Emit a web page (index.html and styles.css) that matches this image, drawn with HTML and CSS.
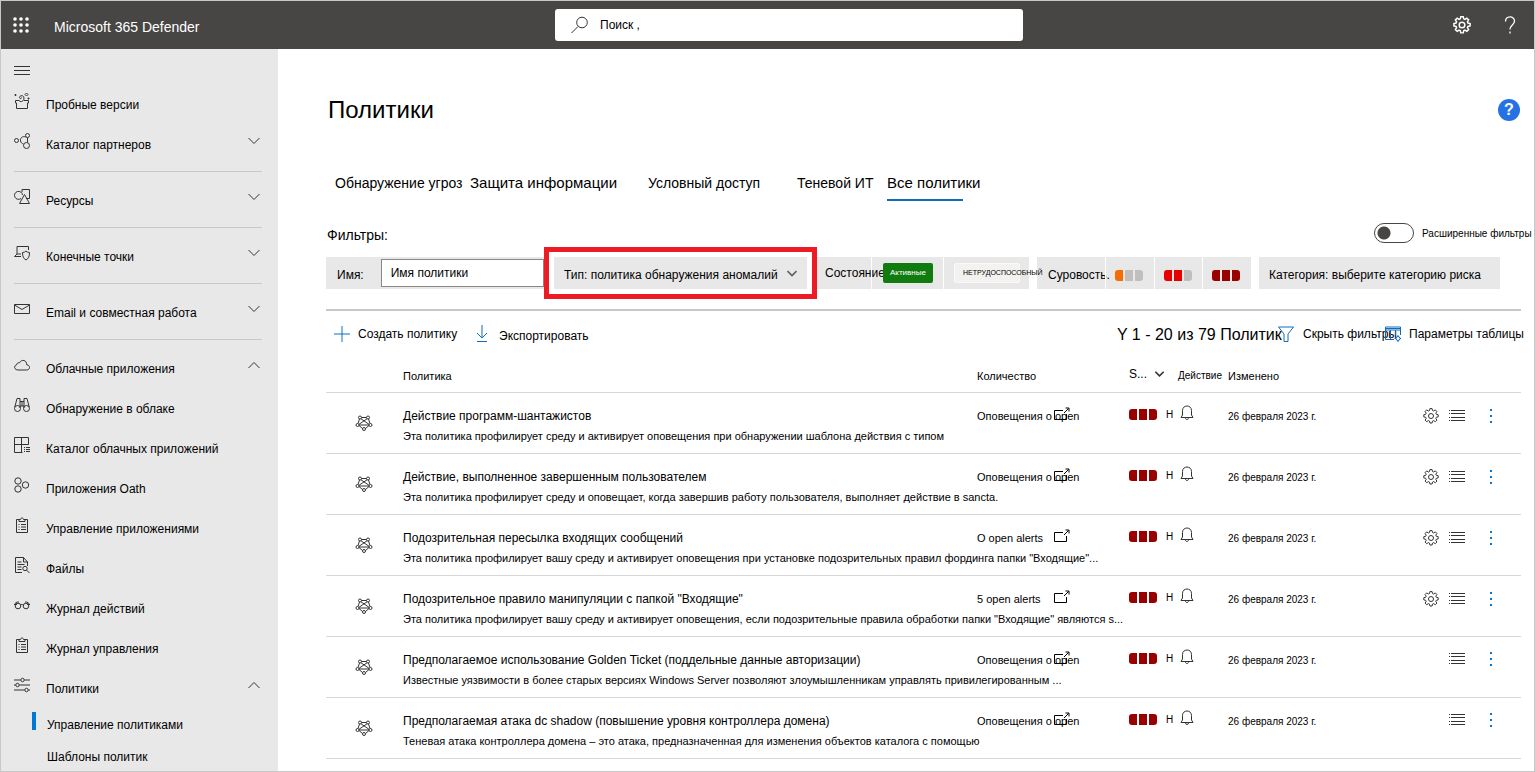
FILE: index.html
```html
<!DOCTYPE html>
<html lang="ru">
<head>
<meta charset="utf-8">
<title>Политики - Microsoft 365 Defender</title>
<link rel="stylesheet" href="styles.css">
</head>
<body>
<svg class="sprite" aria-hidden="true">
  <symbol id="i-gear" viewBox="0 0 16 16"><path d="M6.9.6h2.2l.4 1.9 1.1.5 1.7-1.1 1.6 1.6-1.1 1.7.5 1.1 1.9.4v2.2l-1.9.4-.5 1.1 1.1 1.7-1.6 1.6-1.7-1.1-1.1.5-.4 1.900H6.900l-.4-1.900-1.100-.5-1.700 1.100-1.600-1.600 1.100-1.700-.5-1.100-1.900-.4V6.700l1.900-.4.5-1.100-1.100-1.700 1.600-1.600 1.700 1.100 1.100-.5z"/><circle cx="8" cy="8" r="2.500"/></symbol>
  <symbol id="i-down" viewBox="0 0 12 8"><path d="M.5 1 6 6.500 11.500 1"/></symbol>
  <symbol id="i-up" viewBox="0 0 12 8"><path d="M.5 7 6 1.500 11.500 7"/></symbol>
  <symbol id="i-gift" viewBox="0 0 16 16"><path d="M2.500 10v5.500h11V10M5.500 7.500h-4V10h1M10 7.500h4.500V10h-1M5.500 8.500c3 .5 4.500-1 4.500-3.500C10 2 5.500 2 5.500 4.500c0 1.500 2 1.500 2 0M1.500 1v2M.500 2h2M12.500 0 14 1.500 12.500 3 11 1.500zM14.500 4.500v2M13.500 5.500h2"/></symbol>
  <symbol id="i-partners" viewBox="0 0 16 16"><circle cx="2.500" cy="7.500" r="2"/><circle cx="13.500" cy="2.500" r="2"/><circle cx="12.500" cy="12.500" r="3"/><path d="M12 4C8 2.500 6 5.500 6.500 8c.3 1.500 1.500 2.500 3 3M13.500 4.500v5"/></symbol>
  <symbol id="i-assets" viewBox="0 0 16 16"><path d="M8 3V.5h7.500v9H12M7 9.500A4 4 0 1 1 8.500 6M10.500 5.500 5.500 14.500h10z"/></symbol>
  <symbol id="i-endpoint" viewBox="0 0 16 16"><path d="M3 9V1.500h11.500V5M7 11.500H.5L3 9h4M8.500 7.500c1.500 0 2.500-.5 3.500-1.500 1 1 2 1.500 3.500 1.500 0 4-1 6-3.500 7.500-2.500-1.500-3.500-3.500-3.500-7.500z"/></symbol>
  <symbol id="i-mail" viewBox="0 0 16 16"><path d="M.5 3.500h15v9H.5zM.5 4 8 8.500 15.500 4"/></symbol>
  <symbol id="i-cloud" viewBox="0 0 16 16"><path d="M4 13h8.500c4 0 4-5 .2-5.200C13 3 7.500 1.800 5.500 5.800c-2-.3-2.800.8-2.800 2C-.3 8.200-.2 13 4 13z"/></symbol>
  <symbol id="i-bino" viewBox="0 0 16 16"><circle cx="3.500" cy="11.500" r="3"/><circle cx="12.500" cy="11.500" r="3"/><path d="M.8 10 3 1.500h3V11M10 11V1.500h3l2.200 8.500M6 4.500h4M6 9h4M8 4.500V9"/></symbol>
  <symbol id="i-catalog" viewBox="0 0 16 16"><path d="M8.500 15.500h-8V.5h14v7H.5M7.500.5v15M10 10.500h1M12 10.500h4M10 12.500h1M12 12.500h4M10 14.500h1M12 14.500h4"/></symbol>
  <symbol id="i-oauth" viewBox="0 0 16 16"><circle cx="4" cy="4" r="3.200"/><circle cx="4" cy="12" r="3.200"/><circle cx="11.500" cy="8" r="3.200"/></symbol>
  <symbol id="i-clip" viewBox="0 0 16 16"><path d="M5 2.500H2.500v13h11v-13H11M5 4.500h6v-2H9.500c0-2-3-2-3 0H5zM4.500 7.500h1M7 7.500h5M4.500 10h1M7 10h5M4.500 12.500h1M7 12.500h5"/></symbol>
  <symbol id="i-file" viewBox="0 0 16 16"><path d="M8 15.500H1.500V.5h8L13.500 5v4M9.500.5V5h4M3.500 5h4M3.500 7.500h7M3.500 10h4M3.500 12.500h4"/><circle cx="11" cy="11.500" r="2.200"/><path d="m12.500 13 3 3"/></symbol>
  <symbol id="i-glasses" viewBox="0 0 16 16"><circle cx="4" cy="9" r="2.800"/><circle cx="12" cy="9" r="2.800"/><path d="M.5 8c.5-2.500 2-3 4.500-3M15.500 8c-.5-2.500-2-3-4.500-3M6.500 8c1-.7 2-.7 3 0M0 7.500h3M13 7.500h3"/></symbol>
  <symbol id="i-sliders" viewBox="0 0 16 16"><path d="M0 3h7M10 3h6M0 8h2M5 8h11M0 13h11M14 13h2"/><rect x="7" y="1.200" width="3" height="3.600" rx="1.500"/><rect x="2" y="6.200" width="3" height="3.600" rx="1.500"/><rect x="11" y="11.200" width="3" height="3.600" rx="1.500"/></symbol>
  <symbol id="i-anomaly" viewBox="0 0 18 18"><circle cx="5" cy="3.500" r="1.500"/><circle cx="13" cy="3.500" r="1.500"/><circle cx="2.500" cy="11" r="1.500"/><circle cx="15.500" cy="11" r="1.500"/><circle cx="9" cy="15" r="1.500"/><path d="M6.500 3.500h5M4.500 5 3 9.500M13.500 5 15 9.500M4 11.500 7.500 14.500M14 11.500 10.500 14.500M6 4.800l8 5.500M12 4.800 4 10.300M4 11h10"/></symbol>
  <symbol id="i-open" viewBox="0 0 16 14"><path d="M9 3.500H.5v9h12V7M10 6l4.500-4.500M11.500 1H15v3.500"/></symbol>
  <symbol id="i-bell" viewBox="0 0 14 16"><path d="M1 12.500h12L11.500 10V5.500c0-6-9-6-9 0V10zM5.500 13c0 2 3 2 3 0"/></symbol>
  <symbol id="i-list" viewBox="0 0 16 14"><path d="M0 1.500h1M2 1.500h14M0 4.500h1M2 4.500h14M0 8.500h1M2 8.500h14M0 11.500h1M2 11.500h14"/></symbol>
</svg>

<div class="app">
  <header class="topbar">
    <button class="waffle" aria-label="Средство запуска приложений"><svg viewBox="0 0 16 16"><circle cx="2" cy="2" r="1.800"/><circle cx="8" cy="2" r="1.800"/><circle cx="14" cy="2" r="1.800"/><circle cx="2" cy="8" r="1.800"/><circle cx="8" cy="8" r="1.800"/><circle cx="14" cy="8" r="1.800"/><circle cx="2" cy="14" r="1.800"/><circle cx="8" cy="14" r="1.800"/><circle cx="14" cy="14" r="1.800"/></svg></button>
    <span class="brand">Microsoft 365 Defender</span>
    <label class="search"><svg class="line" viewBox="0 0 18 18" aria-hidden="true"><circle cx="11" cy="6.500" r="5.300"/><path d="M7 10.500.5 17"/></svg><input type="search" placeholder="Поиск ," aria-label="Поиск"></label>
    <div class="top-actions">
      <button aria-label="Параметры"><svg class="line i18"><use href="#i-gear"/></svg></button>
      <button aria-label="Справка"><svg class="line i18" viewBox="0 0 18 18"><path d="M4.500 5.500c0-6 9-6 9-.5 0 4-4.500 4-4.500 8.500M9 15.500V17.500"/></svg></button>
    </div>
  </header>

  <nav class="sidebar" aria-label="Навигация">
    <button class="burger" aria-label="Свернуть"><svg class="line i16" viewBox="0 0 16 16"><path d="M0 4.500h16M0 8.500h16M0 12.500h16"/></svg></button>
    <a class="nav-item" href="#"><svg class="line i16"><use href="#i-gift"/></svg><span>Пробные версии</span></a>
    <a class="nav-item" href="#"><svg class="line i16"><use href="#i-partners"/></svg><span>Каталог партнеров</span><svg class="line chev"><use href="#i-down"/></svg></a>
    <hr class="nav-sep">
    <a class="nav-item" href="#"><svg class="line i16"><use href="#i-assets"/></svg><span>Ресурсы</span><svg class="line chev"><use href="#i-down"/></svg></a>
    <hr class="nav-sep">
    <a class="nav-item" href="#"><svg class="line i16"><use href="#i-endpoint"/></svg><span>Конечные точки</span><svg class="line chev"><use href="#i-down"/></svg></a>
    <hr class="nav-sep">
    <a class="nav-item" href="#"><svg class="line i16"><use href="#i-mail"/></svg><span>Email и совместная работа</span><svg class="line chev"><use href="#i-down"/></svg></a>
    <hr class="nav-sep">
    <a class="nav-item" href="#"><svg class="line i16"><use href="#i-cloud"/></svg><span>Облачные приложения</span><svg class="line chev"><use href="#i-up"/></svg></a>
    <a class="nav-item" href="#"><svg class="line i16"><use href="#i-bino"/></svg><span>Обнаружение в облаке</span></a>
    <a class="nav-item" href="#"><svg class="line i16"><use href="#i-catalog"/></svg><span>Каталог облачных приложений</span></a>
    <a class="nav-item" href="#"><svg class="line i16"><use href="#i-oauth"/></svg><span>Приложения Oath</span></a>
    <a class="nav-item" href="#"><svg class="line i16"><use href="#i-clip"/></svg><span>Управление приложениями</span></a>
    <a class="nav-item" href="#"><svg class="line i16"><use href="#i-file"/></svg><span>Файлы</span></a>
    <a class="nav-item" href="#"><svg class="line i16"><use href="#i-glasses"/></svg><span>Журнал действий</span></a>
    <a class="nav-item" href="#"><svg class="line i16"><use href="#i-clip"/></svg><span>Журнал управления</span></a>
    <a class="nav-item" href="#"><svg class="line i16"><use href="#i-sliders"/></svg><span>Политики</span><svg class="line chev"><use href="#i-up"/></svg></a>
    <a class="nav-sub current" href="#">Управление политиками</a>
    <a class="nav-sub" href="#">Шаблоны политик</a>
  </nav>

  <main class="content">
    <div class="title-row">
      <h1>Политики</h1>
      <button class="help" aria-label="Справка">?</button>
    </div>
    <div class="tabs" role="tablist">
      <button class="tab tab-threat" role="tab">Обнаружение угроз</button>
      <button class="tab tab-info" role="tab">Защита информации</button>
      <button class="tab tab-access" role="tab">Условный доступ</button>
      <button class="tab tab-shadow" role="tab">Теневой ИТ</button>
      <button class="tab tab-all" role="tab" aria-selected="true">Все политики</button>
    </div>

    <div class="filters-head">
      <span>Фильтры:</span>
      <label class="advanced"><input type="checkbox" class="toggle"><span>Расширенные фильтры</span></label>
    </div>
    <div class="filters">
      <div class="group name-group"><label for="name">Имя:</label><input id="name" type="text" value="Имя политики"></div>
      <div class="type-group">
        <select aria-label="Тип"><option>Тип: политика обнаружения аномалий</option></select>
        <svg class="line type-chev"><use href="#i-down"/></svg>
      </div>
      <div class="group state-group">
        <span class="label state-label">Состояние:</span>
        <div class="cell cell-active"><button class="pill active">Активные</button></div>
        <div class="cell cell-disabled"><button class="pill disabled">НЕТРУДОСПОСОБНЫЙ</button></div>
      </div>
      <div class="group severity-group">
        <span class="label severity-label">Суровость.</span>
        <button class="cell sev-cell" aria-label="Низкая"><span class="sev low"><i></i><i></i><i></i></span></button>
        <button class="cell sev-cell" aria-label="Средняя"><span class="sev medium"><i></i><i></i><i></i></span></button>
        <button class="cell sev-cell" aria-label="Высокая"><span class="sev"><i></i><i></i><i></i></span></button>
      </div>
      <button class="group category">Категория: выберите категорию риска</button>
    </div>

    <div class="toolbar">
      <button class="tool create"><svg class="line blue i16" viewBox="0 0 16 16"><path d="M8 0v16M0 8h16"/></svg>Создать политику</button>
      <button class="tool export"><svg class="line blue" viewBox="0 0 12 18"><path d="M6 0v12.500M1 8l5 5 5-5M1 16.500h10"/></svg><span>Экспортировать</span></button>
      <span class="counter">Y 1 - 20 из 79 Политик</span>
      <button class="tool hide"><svg class="line blue i16" viewBox="0 0 16 16"><path d="M.5 1h15L10 8v7.500H6V8z"/></svg>Скрыть фильтры</button>
      <button class="tool params"><svg class="line blue i16" viewBox="0 0 16 16"><path d="M9 13.500H.5V1h15v8M.5 4h15M.5 2.500h15M5.500 4v9M10.500 4v5"/><circle cx="13" cy="12.500" r="2"/><path d="M13 9v1.500M13 14.500V16M9.500 12.500H11M15 12.500h1"/></svg>Параметры таблицы</button>
    </div>

    <table class="policies">
      <colgroup><col class="c-icon"><col><col class="c-count"><col class="c-sev"><col class="c-action"><col class="c-date"><col class="c-tools"></colgroup>
      <thead>
        <tr><th></th><th>Политика</th><th>Количество</th><th class="sort"><button>S... <svg class="line"><use href="#i-down"/></svg></button></th><th class="th-action">Действие</th><th>Изменено</th><th></th></tr>
      </thead>
      <tbody>
        <tr>
          <td class="kind"><svg class="line i18"><use href="#i-anomaly"/></svg></td>
          <td><a class="name" href="#">Действие программ-шантажистов</a><p class="desc">Эта политика профилирует среду и активирует оповещения при обнаружении шаблона действия с типом</p></td>
          <td><a class="alerts" href="#">Оповещения о open<svg class="line"><use href="#i-open"/></svg></a></td>
          <td><span class="sev"><i></i><i></i><i></i></span></td>
          <td><span class="act"><span>Н</span><svg class="line"><use href="#i-bell"/></svg></span></td>
          <td class="date">26 февраля 2023 г.</td>
          <td><div class="tools"><button aria-label="Параметры"><svg class="line i16"><use href="#i-gear"/></svg></button><button aria-label="Список"><svg class="line list"><use href="#i-list"/></svg></button><button class="more" aria-label="Ещё"><i></i><i></i><i></i></button></div></td>
        </tr>
        <tr>
          <td class="kind"><svg class="line i18"><use href="#i-anomaly"/></svg></td>
          <td><a class="name" href="#">Действие, выполненное завершенным пользователем</a><p class="desc">Эта политика профилирует среду и оповещает, когда завершив работу пользователя, выполняет действие в sancta.</p></td>
          <td><a class="alerts" href="#">Оповещения о open<svg class="line"><use href="#i-open"/></svg></a></td>
          <td><span class="sev"><i></i><i></i><i></i></span></td>
          <td><span class="act"><span>Н</span><svg class="line"><use href="#i-bell"/></svg></span></td>
          <td class="date">26 февраля 2023 г.</td>
          <td><div class="tools"><button aria-label="Параметры"><svg class="line i16"><use href="#i-gear"/></svg></button><button aria-label="Список"><svg class="line list"><use href="#i-list"/></svg></button><button class="more" aria-label="Ещё"><i></i><i></i><i></i></button></div></td>
        </tr>
        <tr>
          <td class="kind"><svg class="line i18"><use href="#i-anomaly"/></svg></td>
          <td><a class="name" href="#">Подозрительная пересылка входящих сообщений</a><p class="desc">Эта политика профилирует вашу среду и активирует оповещения при установке подозрительных правил фординга папки "Входящие"...</p></td>
          <td><a class="alerts" href="#">О open alerts<svg class="line"><use href="#i-open"/></svg></a></td>
          <td><span class="sev"><i></i><i></i><i></i></span></td>
          <td><span class="act"><span>Н</span><svg class="line"><use href="#i-bell"/></svg></span></td>
          <td class="date">26 февраля 2023 г.</td>
          <td><div class="tools"><button aria-label="Параметры"><svg class="line i16"><use href="#i-gear"/></svg></button><button aria-label="Список"><svg class="line list"><use href="#i-list"/></svg></button><button class="more" aria-label="Ещё"><i></i><i></i><i></i></button></div></td>
        </tr>
        <tr>
          <td class="kind"><svg class="line i18"><use href="#i-anomaly"/></svg></td>
          <td><a class="name" href="#">Подозрительное правило манипуляции с папкой "Входящие"</a><p class="desc">Эта политика профилирует вашу среду и активирует оповещения, если подозрительные правила обработки папки "Входящие" являются s...</p></td>
          <td><a class="alerts" href="#">5 open alerts<svg class="line"><use href="#i-open"/></svg></a></td>
          <td><span class="sev"><i></i><i></i><i></i></span></td>
          <td><span class="act"><span>Н</span><svg class="line"><use href="#i-bell"/></svg></span></td>
          <td class="date">26 февраля 2023 г.</td>
          <td><div class="tools"><button aria-label="Параметры"><svg class="line i16"><use href="#i-gear"/></svg></button><button aria-label="Список"><svg class="line list"><use href="#i-list"/></svg></button><button class="more" aria-label="Ещё"><i></i><i></i><i></i></button></div></td>
        </tr>
        <tr>
          <td class="kind"><svg class="line i18"><use href="#i-anomaly"/></svg></td>
          <td><a class="name" href="#">Предполагаемое использование Golden Ticket (поддельные данные авторизации)</a><p class="desc">Известные уязвимости в более старых версиях Windows Server позволяют злоумышленникам управлять привилегированным ...</p></td>
          <td><a class="alerts" href="#">Оповещения о open<svg class="line"><use href="#i-open"/></svg></a></td>
          <td><span class="sev"><i></i><i></i><i></i></span></td>
          <td><span class="act"><span>Н</span><svg class="line"><use href="#i-bell"/></svg></span></td>
          <td class="date">26 февраля 2023 г.</td>
          <td><div class="tools"><button aria-label="Список"><svg class="line list"><use href="#i-list"/></svg></button><button class="more" aria-label="Ещё"><i></i><i></i><i></i></button></div></td>
        </tr>
        <tr>
          <td class="kind"><svg class="line i18"><use href="#i-anomaly"/></svg></td>
          <td><a class="name" href="#">Предполагаемая атака dc shadow (повышение уровня контроллера домена)</a><p class="desc">Теневая атака контроллера домена – это атака, предназначенная для изменения объектов каталога с помощью</p></td>
          <td><a class="alerts" href="#">Оповещения о open<svg class="line"><use href="#i-open"/></svg></a></td>
          <td><span class="sev"><i></i><i></i><i></i></span></td>
          <td><span class="act"><span>Н</span><svg class="line"><use href="#i-bell"/></svg></span></td>
          <td class="date">26 февраля 2023 г.</td>
          <td><div class="tools"><button aria-label="Список"><svg class="line list"><use href="#i-list"/></svg></button><button class="more" aria-label="Ещё"><i></i><i></i><i></i></button></div></td>
        </tr>
      </tbody>
    </table>
  </main>
</div>
</body>
</html>
```
FILE: styles.css
```css
* { box-sizing: border-box; }

body {
  margin: 0;
  background: #fff;
  color: #000;
  font: 12px/16px "Liberation Sans", Arial, sans-serif;
  white-space: nowrap;
}

button, input, select {
  margin: 0;
  padding: 0;
  border: 0;
  background: none;
  color: inherit;
  font: inherit;
}

button { text-align: left; }
a { color: inherit; text-decoration: none; }
svg { flex: none; display: block; }

.sprite { display: none; }
.line { fill: none; stroke: #333; stroke-width: 1; }
.blue { stroke: #0f6cbd; }
.i16 { width: 16px; height: 16px; }
.i18 { width: 18px; height: 18px; }

.app {
  display: grid;
  grid-template: 48px 1fr / 277px minmax(0, 1fr);
  min-height: 100vh;
  border: 1px solid #c8c8c8;
  overflow: hidden;
}

/* Top bar */
.topbar {
  grid-column: 1 / -1;
  display: grid;
  grid-template-columns: 53px 1fr 468px 1fr;
  align-items: center;
  padding-right: 10px;
  background: #484644;
  color: #fff;
}
.waffle { padding-left: 12px; }
.waffle svg { width: 16px; height: 16px; fill: #fff; }
.brand { padding-top: 4px; font-size: 14px; }
.search {
  display: flex;
  align-items: center;
  gap: 11px;
  height: 32px;
  padding: 0 16px;
  border-radius: 3px;
  background: #fff;
  color: #000;
}
.search svg { width: 18px; height: 18px; }
.search input { flex: 1; min-width: 0; outline: 0; }
.search input::placeholder { color: #000; opacity: 1; }
.top-actions {
  display: flex;
  justify-content: flex-end;
  gap: 30px;
  padding-right: 5px;
}
.top-actions .line { stroke: #fff; stroke-width: 1.3; }

/* Sidebar */
.sidebar {
  padding-top: 9px;
  background: #e8e8e8;
}
.burger { display: block; height: 24px; margin-bottom: 2px; padding: 0 13px; }
.nav-item {
  display: flex;
  align-items: center;
  gap: 16px;
  height: 40px;
  padding: 0 18px 0 13px;
}
.nav-item svg { margin-bottom: 6px; }
.nav-item span { padding-top: 1px; }
.nav-item .chev { width: 12px; height: 8px; margin-left: auto; }
.nav-sep {
  height: 1px;
  margin: 7px 16px 8px 13px;
  border: 0;
  background: #c8c8c8;
}
.nav-sub {
  display: block;
  padding: 9px 0 5px 46px;
}
.nav-sub.current {
  margin: 0 0 2px 31px;
  padding-left: 15px;
  background: linear-gradient(#0078d4, #0078d4) 0 4px / 4px 18px no-repeat;
}

/* Page */
.content { padding: 45px 13px 0 48px; }
.title-row {
  display: flex;
  align-items: center;
  justify-content: space-between;
  padding: 0 1px 0 2px;
}
h1 { margin: 0; font-size: 24px; line-height: 32px; font-weight: 400; }
.help {
  width: 22px;
  height: 22px;
  border-radius: 50%;
  background: #2672e4;
  color: #fff;
  font-size: 16px;
  font-weight: 700;
  text-align: center;
}
.tabs {
  display: flex;
  margin-top: 39px;
  padding-left: 9px;
  font-size: 14px;
}
.tab { height: 36px; }
.tab-threat { width: 135px; }
.tab-info { width: 178px; font-size: 15px; }
.tab-access { width: 149px; }
.tab-shadow { width: 90px; }
.tab-all { width: 76px; border-bottom: 2px solid #0f6cbd; padding-top: 2px; font-size: 15px; }

.filters-head {
  display: flex;
  justify-content: space-between;
  align-items: center;
  height: 24px;
  margin-top: 20px;
  font-size: 14px;
}
.filters-head > span { padding: 4px 0 0 1px; }
.advanced {
  display: flex;
  align-items: center;
  gap: 8px;
  width: 147px;
  font-size: 10px;
}
.advanced span { padding-top: 2px; }
.toggle {
  appearance: none;
  flex: none;
  width: 40px;
  height: 20px;
  border: 1px solid #484644;
  border-radius: 10px;
  background: radial-gradient(circle at 9px 9px, #484644 6px, transparent 7px);
}

.filters { display: flex; margin-top: 12px; }
.group { height: 32px; background: #e8e8e8; }
.name-group {
  display: flex;
  align-items: center;
  gap: 17px;
  width: 218px;
  padding: 2px 0 2px 11px;
}
.name-group label { padding-top: 4px; }
.name-group input {
  flex: 1;
  min-width: 0;
  height: 28px;
  padding: 0 9px;
  border: 1px solid #8a8886;
  background: #fff;
}
.type-group {
  position: relative;
  width: 253px;
  height: 32px;
  margin: 0 10px;
  background: #e8e8e8;
  outline: 5px solid #ed1c24;
  outline-offset: 5px;
}
.type-group select {
  width: 100%;
  height: 32px;
  padding: 4px 0 0 10px;
  appearance: none;
}
.type-chev {
  position: absolute;
  top: 13px;
  right: 10px;
  width: 10px;
  height: 7px;
  stroke: #605e5c;
  stroke-width: 2;
  pointer-events: none;
}
.state-group, .severity-group { display: flex; }
.state-group { width: 212px; margin-right: 8px; }
.label { line-height: 32px; }
.state-label { width: 54px; padding-left: 8px; }
.cell {
  display: flex;
  align-items: center;
  border-left: 1px solid #fff;
}
.cell-active { width: 72px; padding-left: 11px; }
.cell-disabled { padding-left: 10px; }
.pill {
  height: 20px;
  border-radius: 2px;
  font-size: 8px;
}
.active { width: 50px; padding-left: 7px; background: #107c10; color: #fff; }
.disabled {
  position: relative;
  width: 66px;
  padding-left: 8px;
  border: 1px solid #faf9f8;
  background: #f3f2f1;
  font-size: 7px;
}
.severity-group { width: 214px; margin-right: 8px; }
.severity-label { width: 68px; padding-left: 11px; line-height: 36px; }
.sev-cell { width: 49px; padding: 4px 0 0 9px; }
.sev { display: flex; gap: 2px; }
.sev i { width: 8px; height: 11px; background: #900; }
.sev i:first-child { border-radius: 3px 0 0 3px; }
.sev i:last-child { border-radius: 0 3px 3px 0; }
.low i, .medium i { background: #c0bfbd; }
.low i:first-child { background: #f76c00; }
.medium i:nth-child(-n+2) { background: #e60000; }
.category { width: 241px; padding: 4px 10px 0; }

/* Toolbar */
.toolbar {
  display: flex;
  align-items: center;
  height: 47px;
  margin-top: 20px;
  border-top: 2px solid #c8c8c8;
}
.tool { display: flex; align-items: center; gap: 8px; }
.create { width: 150px; padding-left: 8px; }
.export { gap: 11px; }
.export svg { width: 12px; height: 18px; }
.export span { padding-top: 4px; }
.counter { width: 161px; margin-left: auto; font-size: 16px; padding-top: 2px; }
.hide { width: 107px; gap: 9px; }
.params { width: 136px; }

/* Table */
.policies {
  width: 100%;
  border-collapse: collapse;
  table-layout: fixed;
}
.c-icon { width: 77px; }
.c-count { width: 152px; }
.c-sev { width: 37px; }
.c-action { width: 62px; }
.c-date { width: 195px; }
.c-tools { width: 98px; }
th {
  height: 36px;
  padding: 4px 0 0;
  border-bottom: 1px solid #d8d8d8;
  font-size: 11px;
  font-weight: 400;
  text-align: left;
}
th.sort { padding-top: 1px; }
.sort button { display: flex; align-items: center; gap: 8px; font-size: 12px; }
.sort svg { width: 9px; height: 6px; stroke-width: 2; }
.th-action { padding-left: 12px; font-size: 10px; }
td {
  height: 61px;
  padding: 15px 0 0;
  border-bottom: 1px solid #d8d8d8;
  vertical-align: top;
  font-size: 11px;
}
.kind { padding: 21px 0 0 29px; }
.name { display: block; font-size: 12px; }
.desc { margin: 4px 0 0; }
.alerts { position: relative; display: block; }
.alerts svg { position: absolute; top: -1px; left: 77px; width: 16px; height: 14px; stroke: #000; }
td .sev { padding-top: 1px; }
.act { display: flex; gap: 7px; margin-top: -1px; font-size: 10px; }
.act span { width: 7px; overflow: hidden; }
.act svg { width: 14px; height: 16px; margin-top: -2px; }
.date { padding-top: 16px; font-size: 10px; }
.tools { display: flex; align-items: center; justify-content: flex-end; gap: 10px; padding-right: 29px; }
.tools .list { width: 16px; height: 14px; }
.more { display: grid; gap: 4px; margin-left: 15px; }
.more i { width: 2px; height: 2px; background: #0078d4; }
```
